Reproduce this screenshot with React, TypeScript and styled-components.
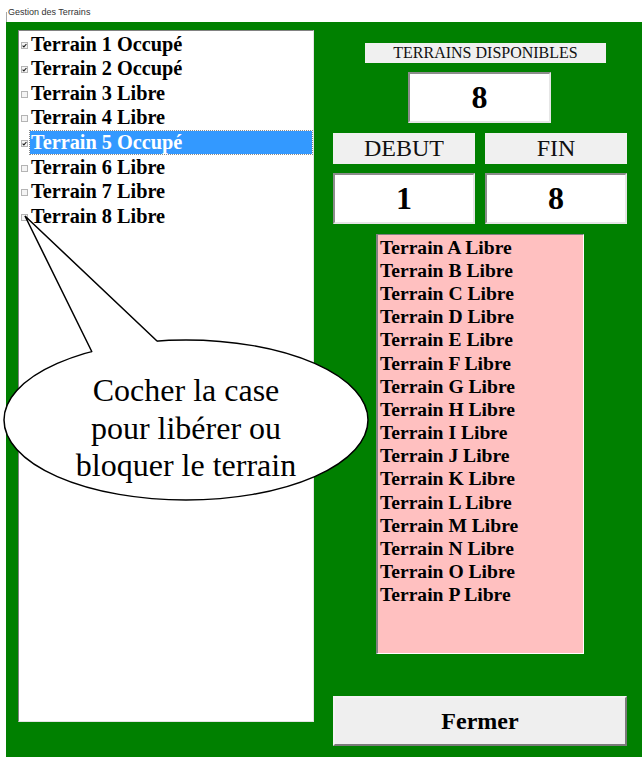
import React from 'react';
import styled, { createGlobalStyle } from 'styled-components';

const GlobalStyle = createGlobalStyle`
  html, body {
    margin: 0;
    padding: 0;
    background: #ffffff;
  }
  body {
    font-family: "Liberation Serif", "Times New Roman", serif;
  }
`;

const Window = styled.div`
  position: relative;
  width: 642px;
  height: 757px;
  overflow: hidden;
  background: #ffffff;
`;

const TitleBar = styled.div`
  height: 22px;
  margin-left: 6px;
  padding: 7px 0 0 2px;
  box-sizing: border-box;
  font-family: "Liberation Sans", Arial, sans-serif;
  font-size: 9px;
  line-height: 10px;
  color: #333;
  background: linear-gradient(#a8a8a8, #a8a8a8) 0 12px / 1px 10px no-repeat;
`;

const Frame = styled.div`
  display: flex;
  gap: 19px;
  margin-left: 6px;
  height: 735px;
  padding: 8px 0 0 12px;
  box-sizing: border-box;
  background: #008000;
`;

const TerrainList = styled.div`
  width: 296px;
  height: 692px;
  box-sizing: border-box;
  padding: 1px 1px 0 2px;
  background: #ffffff;
  border: 1px solid;
  border-color: #828282 #e3e3e3 #e3e3e3 #828282;
`;

const TerrainRow = styled.label`
  display: flex;
  align-items: center;
  height: 24.57px;
`;

const Check = styled.span`
  display: flex;
  align-items: center;
  justify-content: center;
  width: 7px;
  height: 7px;
  margin: 2px 2px 0 0;
  box-sizing: border-box;
  border: 1px solid #b4b4b4;
  background: #f4f4f4;
`;

const RowLabel = styled.span<{ $selected?: boolean }>`
  flex: 1;
  height: 23px;
  padding-left: 1px;
  display: flex;
  align-items: center;
  font-weight: bold;
  font-size: 20.3px;
  color: ${p => (p.$selected ? '#ffffff' : '#000000')};
  background: ${p => (p.$selected ? '#3399ff' : 'transparent')};
  outline: ${p => (p.$selected ? '1px dotted #8a8a8a' : 'none')};
`;

const RightColumn = styled.div`
  display: flex;
  flex-direction: column;
  width: 294px;
  padding-top: 13px;
`;

const Caption = styled.div<{ $top?: number; $left?: number; $width?: number; $height: number; $size: number }>`
  display: flex;
  align-items: center;
  justify-content: center;
  margin-top: ${p => p.$top ?? 0}px;
  margin-left: ${p => p.$left ?? 0}px;
  width: ${p => (p.$width ? `${p.$width}px` : 'auto')};
  height: ${p => p.$height}px;
  background: #f0f0f0;
  font-size: ${p => p.$size}px;
  color: #111;
`;

const ValueBox = styled.div<{ $top?: number; $left?: number; $width?: number }>`
  display: flex;
  align-items: center;
  justify-content: center;
  margin-top: ${p => p.$top ?? 0}px;
  margin-left: ${p => p.$left ?? 0}px;
  width: ${p => (p.$width ? `${p.$width}px` : 'auto')};
  height: 51px;
  box-sizing: border-box;
  background: #ffffff;
  border: 2px solid;
  border-color: #8c8c8c #e6e6e6 #e6e6e6 #8c8c8c;
  font-weight: bold;
  font-size: 32px;
  color: #000;
`;

const Pair = styled.div<{ $top: number }>`
  display: grid;
  grid-template-columns: 142px 142px;
  gap: 10px;
  margin-top: ${p => p.$top}px;
`;

const FreeList = styled.div`
  margin: 10px 0 0 43px;
  width: 208px;
  height: 420px;
  box-sizing: border-box;
  padding: 1px 0 0 2px;
  background: #ffc0c0;
  border: 1px solid;
  border-color: #808080 #ffffff #ffffff #808080;
  border-width: 1px 1px 1px 2px;
`;

const FreeItem = styled.div`
  height: 23.2px;
  display: flex;
  align-items: center;
  font-weight: bold;
  font-size: 19.6px;
  color: #000;
`;

const CloseButton = styled.button`
  margin-top: 42px;
  width: 294px;
  height: 50px;
  background: #efefef;
  border: 2px solid;
  border-color: #f4f4f4 #7a7a7a #7a7a7a #f4f4f4;
  font-family: "Liberation Serif", "Times New Roman", serif;
  font-weight: bold;
  font-size: 24px;
  color: #000;
  padding: 0;
`;

const Callout = styled.div`
  position: absolute;
  left: 0;
  top: 210px;
  width: 372px;
  height: 300px;
  pointer-events: none;
`;

const CalloutShape = styled.svg`
  position: absolute;
  inset: 0;
`;

const CalloutText = styled.div`
  position: absolute;
  left: 0;
  top: 162px;
  width: 372px;
  text-align: center;
  font-size: 32px;
  line-height: 37.5px;
  color: #000;
`;

interface Terrain {
  id: number;
  occupied: boolean;
}

const terrains: Terrain[] = [
  { id: 1, occupied: true },
  { id: 2, occupied: true },
  { id: 3, occupied: false },
  { id: 4, occupied: false },
  { id: 5, occupied: true },
  { id: 6, occupied: false },
  { id: 7, occupied: false },
  { id: 8, occupied: false },
];

const freeTerrains = 'ABCDEFGHIJKLMNOP'.split('');

const App: React.FC = () => {
  const selected = 5;

  return (
    <Window>
      <GlobalStyle />
      <TitleBar>Gestion des Terrains</TitleBar>
      <Frame>
        <TerrainList>
          {terrains.map(t => (
            <TerrainRow key={t.id}>
              <Check>
                {t.occupied && (
                  <svg width="5" height="5" viewBox="0 0 5 5">
                    <path d="M0.6 2.6 L1.9 3.9 L4.4 1" fill="none" stroke="#1a1a1a" strokeWidth="1.1" />
                  </svg>
                )}
              </Check>
              <RowLabel $selected={t.id === selected}>
                Terrain {t.id} {t.occupied ? 'Occupé' : 'Libre'}
              </RowLabel>
            </TerrainRow>
          ))}
        </TerrainList>

        <RightColumn>
          <Caption $left={32} $width={241} $height={20} $size={16}>
            TERRAINS DISPONIBLES
          </Caption>
          <ValueBox $top={9} $left={75} $width={143}>8</ValueBox>
          <Pair $top={10}>
            <Caption $height={31} $size={24}>DEBUT</Caption>
            <Caption $height={31} $size={24}>FIN</Caption>
          </Pair>
          <Pair $top={9}>
            <ValueBox>1</ValueBox>
            <ValueBox>8</ValueBox>
          </Pair>
          <FreeList>
            {freeTerrains.map(l => (
              <FreeItem key={l}>Terrain {l} Libre</FreeItem>
            ))}
          </FreeList>
          <CloseButton>Fermer</CloseButton>
        </RightColumn>
      </Frame>

      <Callout>
        <CalloutShape width="372" height="300" viewBox="0 0 372 300">
          <ellipse cx="186" cy="210" rx="182" ry="80" fill="#ffffff" stroke="#000" strokeWidth="1.5" />
          <polygon points="25,6 92,142 100,150 150,148 157,131" fill="#ffffff" />
          <path d="M92 142 L25 6 L157 131" fill="none" stroke="#000" strokeWidth="1.5" strokeLinejoin="miter" />
        </CalloutShape>
        <CalloutText>
          Cocher la case
          <br />
          pour libérer ou
          <br />
          bloquer le terrain
        </CalloutText>
      </Callout>
    </Window>
  );
};

export default App;
